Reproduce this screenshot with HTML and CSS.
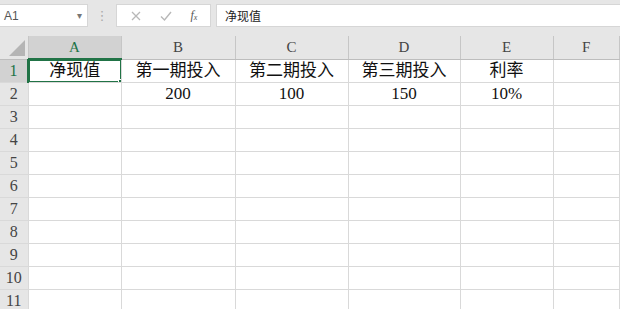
FILE: index.html
```html
<!DOCTYPE html>
<html lang="zh-CN">
<head>
  <meta charset="utf-8">
  <title>Sheet1</title>
  <link rel="stylesheet" href="styles.css">
</head>
<body>

<div class="fbar">
  <div class="namebox">
    <span>A1</span>
    <span class="caret">&#9662;</span>
  </div>
  <div class="grip">&#8942;</div>
  <div class="btns">
    <svg width="12" height="12" viewBox="0 0 12 12"><path d="M2 2L10 10M10 2L2 10" stroke="#b8b8b8" stroke-width="1.3"/></svg>
    <svg width="14" height="12" viewBox="0 0 14 12"><path d="M2 6.5L5.5 10L12 2" stroke="#b8b8b8" stroke-width="1.4" fill="none"/></svg>
    <span class="fx">f<sub>x</sub></span>
  </div>
  <div class="input">净现值</div>
</div>

<table class="sheet">
  <colgroup>
    <col style="width:28px"><col style="width:93px"><col style="width:114px"><col style="width:113px"><col style="width:112px"><col style="width:93px"><col>
  </colgroup>
  <tr class="head">
    <th class="corner"><span class="tri"></span></th>
    <th class="sel">A</th><th>B</th><th>C</th><th>D</th><th>E</th><th>F</th>
  </tr>
  <tr><th class="rn sel">1</th><td class="active">净现值</td><td>第一期投入</td><td>第二期投入</td><td>第三期投入</td><td>利率</td><td></td></tr>
  <tr><th class="rn">2</th><td></td><td>200</td><td>100</td><td>150</td><td>10%</td><td></td></tr>
  <tr><th class="rn">3</th><td></td><td></td><td></td><td></td><td></td><td></td></tr>
  <tr><th class="rn">4</th><td></td><td></td><td></td><td></td><td></td><td></td></tr>
  <tr><th class="rn">5</th><td></td><td></td><td></td><td></td><td></td><td></td></tr>
  <tr><th class="rn">6</th><td></td><td></td><td></td><td></td><td></td><td></td></tr>
  <tr><th class="rn">7</th><td></td><td></td><td></td><td></td><td></td><td></td></tr>
  <tr><th class="rn">8</th><td></td><td></td><td></td><td></td><td></td><td></td></tr>
  <tr><th class="rn">9</th><td></td><td></td><td></td><td></td><td></td><td></td></tr>
  <tr><th class="rn">10</th><td></td><td></td><td></td><td></td><td></td><td></td></tr>
  <tr><th class="rn">11</th><td></td><td></td><td></td><td></td><td></td><td></td></tr>
</table>

</body>
</html>
```

FILE: styles.css
```css
html, body {margin: 0; padding: 0; overflow: hidden;}
body {width: 620px; height: 309px; background: #fff; font-family: "Liberation Serif", "Noto Sans CJK SC", serif; color: #222;}

.fbar {height: 36px; background: #e6e6e6; display: flex; align-items: flex-start; padding-top: 4px; box-sizing: border-box;}
.namebox {width: 88px; height: 23px; background: #fff; border: 1px solid #d6d6d6; border-left: 0; box-sizing: border-box; display: flex; align-items: center; justify-content: space-between; padding: 0 5px 0 4px; font-family: "Liberation Sans", "Noto Sans CJK SC", sans-serif; font-size: 12px; color: #555;}
.caret {font-size: 10px; color: #777;}
.grip {width: 28px; height: 23px; line-height: 23px; text-align: center; color: #aaa; font-size: 13px; font-family: "DejaVu Sans", sans-serif;}
.btns {width: 95px; height: 23px; background: #fff; border: 1px solid #d6d6d6; box-sizing: border-box; display: flex; align-items: center; justify-content: space-around; padding: 0 4px;}
.fx {font-family: "Liberation Serif", serif; font-style: italic; font-size: 12px; color: #555;}
.fx sub {font-size: 8px; vertical-align: -1px;}
.input {flex: 1; margin-left: 5px; height: 23px; background: #fff; border: 1px solid #d6d6d6; border-right: 0; box-sizing: border-box; padding-left: 8px; line-height: 21px; font-family: "Noto Sans CJK SC", sans-serif; font-size: 12px; color: #222;}

.sheet {border-collapse: collapse; table-layout: fixed; width: 620px;}
.sheet th, .sheet td {height: 22px; padding: 0; border: 1px solid #d9d9d9; text-align: center; white-space: nowrap; overflow: hidden;}
.sheet td {font-size: 17px; line-height: 22px; color: #111;}
.sheet tr:first-child th {border-top: 0;}
.sheet tr > :first-child {border-left: 0;}
.head th {background: #e6e6e6; font-weight: normal; font-size: 15px; color: #444; border-color: #c6c6c6; border-bottom-color: #bdbdbd;}
.head th.sel {background: #d2d2d2; color: #217346; border-bottom: 2px solid #217346;}
.corner {position: relative;}
.tri {position: absolute; right: 3px; bottom: 3px; width: 0; height: 0; border-left: 16px solid transparent; border-bottom: 16px solid #b5b5b5;}
.rn {background: #e6e6e6; font-weight: normal; font-size: 16px; color: #444; border-color: #c6c6c6;}
.rn.sel {background: #d2d2d2; color: #217346; border-right: 2px solid #217346;}

.active {position: relative;}
.active::after {content: ""; position: absolute; left: -1px; top: -1px; right: -1px; bottom: -1px; border: 2px solid #217346;}
.active::before {content: ""; position: absolute; right: -4px; bottom: -4px; width: 5px; height: 5px; background: #217346; border: 1px solid #fff; z-index: 1;}
```
